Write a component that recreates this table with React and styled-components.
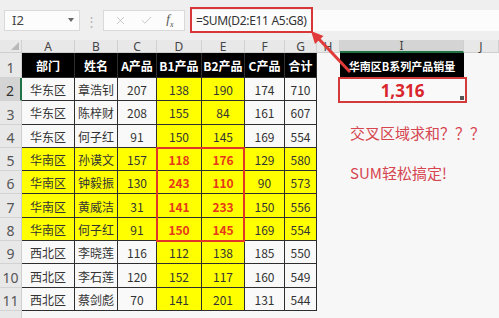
import React from 'react';
import styled, { createGlobalStyle } from 'styled-components';
import { X, Check } from 'lucide-react';

const GlobalStyle = createGlobalStyle`
  html, body {
    margin: 0;
    padding: 0;
    background: #f7f7f7;
  }
  body {
    font-family: "Noto Sans CJK SC", "Noto Sans", sans-serif;
  }
`;

const Page = styled.div`
  position: relative;
  width: 499px;
  height: 318px;
  overflow: hidden;
  display: flex;
  flex-direction: column;
`;

// formula bar strip
const Toolbar = styled.div`
  height: 40px;
  flex: none;
  display: flex;
  align-items: center;
  padding-left: 4px;
  background: #efefef;
`;

const NameBox = styled.div`
  width: 76px;
  height: 21px;
  box-sizing: border-box;
  display: flex;
  align-items: center;
  justify-content: space-between;
  padding: 0 5px 0 7px;
  background: #fcfcfc;
  border: 1px solid #d9d9d9;
  font-family: "Noto Sans", sans-serif;
  font-size: 13px;
  color: #444;
`;

const Caret = styled.span`
  width: 0;
  height: 0;
  border-left: 3px solid transparent;
  border-right: 3px solid transparent;
  border-top: 4px solid #666;
`;

const Dots = styled.div`
  width: 23px;
  text-align: center;
  font-size: 13px;
  color: #b5b5b5;
`;

const ButtonBox = styled.div`
  width: 82px;
  height: 21px;
  box-sizing: border-box;
  display: flex;
  align-items: center;
  justify-content: space-around;
  padding: 0 4px;
  background: #fcfcfc;
  border: 1px solid #d9d9d9;
  color: #b8b8b8;
`;

const Fx = styled.span`
  font-family: "Liberation Serif", serif;
  font-style: italic;
  font-size: 13px;
  color: #555;
  sub {
    font-size: 8px;
  }
`;

const FormulaBar = styled.div`
  flex: 1;
  height: 21px;
  margin-left: 5px;
  display: flex;
  align-items: center;
  background: #fcfcfc;
`;

const FormulaText = styled.div`
  height: 26px;
  box-sizing: border-box;
  display: flex;
  align-items: center;
  padding: 0 4px;
  border: 2px solid #d8373a;
  font-family: "Noto Sans", sans-serif;
  font-size: 12px;
  letter-spacing: -0.3px;
  color: #333;
`;

const Sheet = styled.div`
  flex: 1;
  display: grid;
  grid-template-columns: 22px 53px 43px 39px 45px 43px 40px 32px 23px 124px 1fr;
  grid-template-rows: 13px 25px repeat(11, 23.3px);
  background: #f7f7f7;
`;

const ColHead = styled.div`
  grid-row: 1;
  grid-column: ${p => p.$col};
  display: flex;
  align-items: center;
  justify-content: center;
  box-sizing: border-box;
  background: ${p => (p.$active ? '#d4d4d4' : '#e8e8e8')};
  border-right: 1px solid #d0d0d0;
  border-bottom: ${p => (p.$active ? '2px solid #217346' : '1px solid #cfcfcf')};
  font-family: "Noto Sans", sans-serif;
  font-size: 12px;
  line-height: 13px;
  color: #444;
`;

const Corner = styled(ColHead)`
  justify-content: flex-end;
  align-items: flex-end;
  padding: 0 2px 2px 0;
  &::after {
    content: '';
    width: 0;
    height: 0;
    border-left: 8px solid transparent;
    border-bottom: 8px solid #b9b9b9;
  }
`;

const RowHead = styled.div`
  grid-row: ${p => p.$row};
  grid-column: 1;
  display: flex;
  align-items: flex-end;
  justify-content: center;
  box-sizing: border-box;
  padding-bottom: 1px;
  background: ${p => (p.$active ? '#d4d4d4' : '#e8e8e8')};
  border-right: ${p => (p.$active ? '2px solid #217346' : '1px solid #cfcfcf')};
  border-bottom: 1px solid #d3d3d3;
  font-family: "Noto Sans", sans-serif;
  font-size: 14px;
  line-height: 16px;
  color: ${p => (p.$active ? '#333' : '#555')};
`;

const fills = { black: '#000', yellow: '#ffff00', white: '#f9f9f9' };

const Cell = styled.div`
  grid-row: ${p => p.$row};
  grid-column: ${p => p.$col};
  display: flex;
  align-items: center;
  justify-content: center;
  box-sizing: border-box;
  padding-top: 1px;
  background: ${p => fills[p.$fill]};
  border-right: 1px solid #2e2e2e;
  border-bottom: 1px solid #2e2e2e;
  font-size: 12px;
  font-weight: ${p => (p.$strong ? 700 : 400)};
  color: ${p => (p.$fill === 'black' ? '#fff' : p.$strong ? '#e6391a' : '#333')};
  white-space: nowrap;
`;

const RangeBox = styled.div`
  grid-row: 6 / 10;
  grid-column: 5 / 7;
  margin: -1px 0 -1px -1px;
  border: 2px solid #e2352a;
  pointer-events: none;
`;

const TitleCell = styled.div`
  grid-row: 2;
  grid-column: 10;
  display: flex;
  align-items: center;
  justify-content: center;
  background: #000;
  color: #fff;
  font-size: 11px;
  font-weight: 700;
`;

const TotalCell = styled.div`
  grid-row: 3;
  grid-column: 10;
  position: relative;
  display: flex;
  align-items: center;
  justify-content: center;
  margin: -1px -3px -2px -2px;
  border: 2px solid #d33a3a;
  background: #f9f9f9;
  font-family: "Noto Sans", sans-serif;
  font-size: 17px;
  font-weight: 700;
  color: #d9262c;
  &::after {
    content: '';
    position: absolute;
    right: 1px;
    bottom: 1px;
    width: 4px;
    height: 4px;
    background: #555;
  }
`;

const Notes = styled.div`
  grid-row: 4 / 9;
  grid-column: 10 / 12;
  display: flex;
  flex-direction: column;
  gap: 20px;
  padding: 22px 0 0 10px;
  font-size: 15px;
  line-height: 20px;
  color: #d6444f;
  white-space: nowrap;
`;

const Arrow = styled.svg`
  position: absolute;
  left: 0;
  top: 0;
  pointer-events: none;
`;

const letters = ['A', 'B', 'C', 'D', 'E', 'F', 'G', 'H', 'I', 'J'];
const header = ['部门', '姓名', 'A产品', 'B1产品', 'B2产品', 'C产品', '合计'];
const rows = [
  ['华东区', '章浩钊', 207, 138, 190, 174, 710],
  ['华东区', '陈梓财', 208, 155, 84, 161, 607],
  ['华东区', '何子红', 91, 150, 145, 169, 554],
  ['华南区', '孙谟文', 157, 118, 176, 129, 580],
  ['华南区', '钟毅振', 130, 243, 110, 90, 573],
  ['华南区', '黄威洁', 31, 141, 233, 150, 556],
  ['华南区', '何子红', 91, 150, 145, 169, 554],
  ['西北区', '李晓莲', 116, 112, 138, 185, 550],
  ['西北区', '李石莲', 120, 152, 117, 160, 549],
  ['西北区', '蔡剑彪', 70, 141, 201, 131, 544],
];

const App = () => {
  return (
    <Page>
      <GlobalStyle />
      <Toolbar>
        <NameBox>
          I2
          <Caret />
        </NameBox>
        <Dots>⋮</Dots>
        <ButtonBox>
          <X size={13} strokeWidth={1.4} />
          <Check size={13} strokeWidth={1.4} />
          <Fx>
            f<sub>x</sub>
          </Fx>
        </ButtonBox>
        <FormulaBar>
          <FormulaText>=SUM(D2:E11 A5:G8)</FormulaText>
        </FormulaBar>
      </Toolbar>

      <Sheet>
        <Corner $col={1} />
        {letters.map((l, i) => (
          <ColHead key={l} $col={i === 9 ? '11 / 12' : i + 2} $active={l === 'I'}>
            {l}
          </ColHead>
        ))}
        {Array.from({ length: 12 }, (_, i) => (
          <RowHead key={i} $row={i + 2} $active={i === 1}>
            {i + 1}
          </RowHead>
        ))}

        {header.map((h, c) => (
          <Cell key={h} $row={2} $col={c + 2} $fill="black" $strong>
            {h}
          </Cell>
        ))}
        {rows.map((r, ri) =>
          r.map((v, c) => {
            const south = ri >= 3 && ri <= 6;
            const bCol = c === 3 || c === 4;
            return (
              <Cell
                key={ri + '-' + c}
                $row={ri + 3}
                $col={c + 2}
                $fill={south || bCol ? 'yellow' : 'white'}
                $strong={south && bCol}
              >
                {v}
              </Cell>
            );
          })
        )}
        <RangeBox />

        <TitleCell>华南区B系列产品销量</TitleCell>
        <TotalCell>1,316</TotalCell>
        <Notes>
          <span>交叉区域求和？？？</span>
          <span>SUM轻松搞定!</span>
        </Notes>
      </Sheet>

      <Arrow width="499" height="318" viewBox="0 0 499 318">
        <line x1="350" y1="72" x2="317" y2="37" stroke="#e03a3a" strokeWidth="3" />
        <polygon points="311,31 323.5,36 315,44" fill="#e03a3a" />
      </Arrow>
    </Page>
  );
};

export default App;
